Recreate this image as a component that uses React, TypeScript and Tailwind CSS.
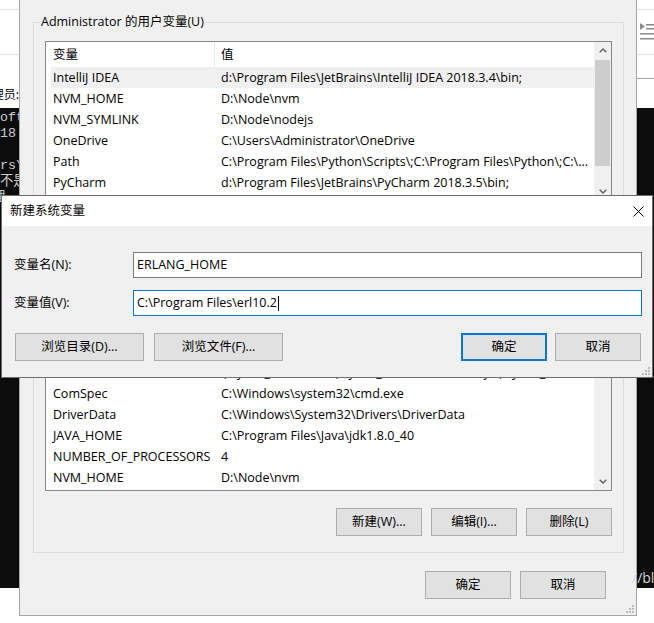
import React from 'react'

type Row = { name: string; value: string; active?: boolean }

const userVars: Row[] = [
  { name: 'IntelliJ IDEA', value: 'd:\\Program Files\\JetBrains\\IntelliJ IDEA 2018.3.4\\bin;', active: true },
  { name: 'NVM_HOME', value: 'D:\\Node\\nvm' },
  { name: 'NVM_SYMLINK', value: 'D:\\Node\\nodejs' },
  { name: 'OneDrive', value: 'C:\\Users\\Administrator\\OneDrive' },
  { name: 'Path', value: 'C:\\Program Files\\Python\\Scripts\\;C:\\Program Files\\Python\\;C:\\...' },
  { name: 'PyCharm', value: 'd:\\Program Files\\JetBrains\\PyCharm 2018.3.5\\bin;' },
  { name: 'TEMP', value: '%USERPROFILE%\\AppData\\Local\\Temp' },
]

const systemVars: Row[] = [
  { name: 'ChocolateyInstall', value: 'C:\\ProgramData\\chocolatey' },
  { name: 'ChocolateyLastPathUpdate', value: '131912345678901234' },
  { name: 'CLASSPATH', value: '.;%JAVA_HOME%\\lib;%JAVA_HOME%\\lib\\tools.jar;%JAVA_HOME%\\jre\\lib' },
  { name: 'ComSpec', value: 'C:\\Windows\\system32\\cmd.exe' },
  { name: 'DriverData', value: 'C:\\Windows\\System32\\Drivers\\DriverData' },
  { name: 'JAVA_HOME', value: 'C:\\Program Files\\Java\\jdk1.8.0_40' },
  { name: 'NUMBER_OF_PROCESSORS', value: '4' },
  { name: 'NVM_HOME', value: 'D:\\Node\\nvm' },
]

// only the slice of the console that peeks out left of the dialog
const terminalLines = ['Microsoft', '(c) 2018', '', 'C:\\Users\\', "'erl' 不是", '或批处理']

function Chevron({ down = false }: { down?: boolean }) {
  return (
    <svg width="8" height="5" viewBox="0 0 8 5" className={down ? 'rotate-180' : ''}>
      <polyline points="0.7,4.3 4,1 7.3,4.3" fill="none" stroke="#606060" strokeWidth="1.4" />
    </svg>
  )
}

function Grip() {
  return (
    <svg width="8" height="8" viewBox="0 0 8 8" className="absolute bottom-[2px] right-[2px]">
      <rect x="6" y="0" width="2" height="2" fill="#bdbdbd" />
      <rect x="3" y="3" width="2" height="2" fill="#bdbdbd" />
      <rect x="6" y="3" width="2" height="2" fill="#bdbdbd" />
      <rect x="0" y="6" width="2" height="2" fill="#bdbdbd" />
      <rect x="3" y="6" width="2" height="2" fill="#bdbdbd" />
      <rect x="6" y="6" width="2" height="2" fill="#bdbdbd" />
    </svg>
  )
}

function Btn({ children, className = '', focused = false }: { children: React.ReactNode; className?: string; focused?: boolean }) {
  return (
    <button
      className={`flex h-[28px] items-center justify-center bg-[#e1e1e1] text-black ${
        focused ? 'border-2 border-[#0078d7]' : 'border border-[#adadad]'
      } ${className}`}
    >
      {children}
    </button>
  )
}

function VarList({ rows, className, thumbHeight }: { rows: Row[]; className: string; thumbHeight: number }) {
  return (
    <div className={`mx-[11px] flex overflow-hidden border border-[#828790] bg-white ${className}`}>
      <div className="min-w-0 flex-1 pt-px">
        {/* header */}
        <div className="flex h-[24px] items-center">
          <div className="flex h-full w-[169px] items-center border-r border-[#e5e5e5] pl-[7px]">变量</div>
          <div className="pl-[6px]">值</div>
        </div>
        {rows.map((r) => (
          <div
            key={r.name}
            className={`ml-[5px] flex h-[21px] items-center whitespace-nowrap pt-px ${r.active ? 'bg-[#f0f0f0]' : ''}`}
          >
            <div className="w-[170px] overflow-hidden pl-[2px]">{r.name}</div>
            <div className="min-w-0 flex-1 overflow-hidden">{r.value}</div>
          </div>
        ))}
      </div>
      {/* scrollbar */}
      <div className="flex w-[17px] flex-col bg-[#f0f0f0]">
        <div className="flex h-[17px] items-center justify-center">
          <Chevron />
        </div>
        <div className="mx-px mt-px bg-[#cdcdcd]" style={{ height: thumbHeight }} />
        <div className="flex-1" />
        <div className="flex h-[17px] items-center justify-center">
          <Chevron down />
        </div>
      </div>
    </div>
  )
}

export default function App() {
  return (
    <div className="relative h-[623px] w-[654px] overflow-hidden bg-white font-['Open_Sans','Noto_Sans_CJK_SC',sans-serif] text-[12.5px] text-black">
      {/* left background windows */}
      <div className="absolute left-0 top-0 h-full w-[19px] overflow-hidden bg-white">
        <div className="h-[10px] border-b border-[#e3e3e3]" />
        <div className="h-[45px] border-b border-[#e3e3e3]" />
        <div className="flex h-[53px] justify-end pt-[31px] font-['Noto_Sans_CJK_SC',sans-serif] text-[12px] leading-[16px] whitespace-nowrap">管理员:</div>
        <div className="h-[480px] overflow-hidden bg-[#0c0c0c] pt-[2px] font-['Liberation_Mono','Noto_Sans_CJK_SC',monospace] text-[13.33px] leading-[16px] text-[#cccccc]">
          {terminalLines.map((line, i) => (
            <div key={i} className="ml-[-48px] h-[16px] whitespace-nowrap">
              {line}
            </div>
          ))}
        </div>
      </div>

      {/* right background windows */}
      <div className="absolute left-[637px] top-0 h-full w-[17px] overflow-hidden bg-white">
        <div className="h-[10px] border-b border-[#e3e3e3]" />
        <div className="h-[45px] border-b border-[#e3e3e3] pl-[3px] pt-[12px]">
          <svg width="14" height="20" viewBox="0 0 14 20">
            <polygon points="0,1 0,8 5,4.5" fill="#8a8a8a" />
            <rect x="6" y="2" width="8" height="1.5" fill="#8a8a8a" />
            <rect x="6" y="6" width="8" height="1.5" fill="#8a8a8a" />
            <rect x="0" y="11" width="14" height="1.5" fill="#8a8a8a" />
            <rect x="0" y="16" width="14" height="1.5" fill="#8a8a8a" />
          </svg>
        </div>
        <div className="h-[24px] border-b border-[#a0a0a0]" />
        <div className="h-[29px]" />
        <div className="h-[480px] bg-[#0c0c0c]" />
      </div>

      {/* 环境变量 dialog */}
      <div className="absolute left-[19px] top-0 h-[616px] w-[618px] border-x border-b border-[#a6a6a6] bg-[#f0f0f0]">
        <fieldset className="ml-[13px] mt-[14px] w-[591px] min-w-0 border border-[#dcdcdc] pb-[16px]">
          <legend className="ml-[6px] px-px leading-[16px]">Administrator 的用户变量(U)</legend>
          <VarList rows={userVars} className="mt-[11px] h-[160px]" thumbHeight={106} />
          <div className="mx-[11px] mt-[17px] flex justify-end gap-[9px]">
            <Btn className="w-[86px]">新建(N)...</Btn>
            <Btn className="w-[86px]">编辑(E)...</Btn>
            <Btn className="w-[86px]">删除(D)</Btn>
          </div>
        </fieldset>

        <fieldset className="ml-[13px] mt-[4px] w-[591px] min-w-0 border border-[#dcdcdc] pb-[16px]">
          <legend className="ml-[6px] px-px leading-[16px]">系统变量(S)</legend>
          <VarList rows={systemVars} className="mt-[11px] h-[197px]" thumbHeight={60} />
          <div className="mx-[11px] mt-[17px] flex justify-end gap-[9px]">
            <Btn className="w-[86px]">新建(W)...</Btn>
            <Btn className="w-[86px]">编辑(I)...</Btn>
            <Btn className="w-[86px]">删除(L)</Btn>
          </div>
        </fieldset>

        <div className="mt-[18px] flex justify-end gap-[9px] pr-[30px]">
          <Btn className="w-[86px]">确定</Btn>
          <Btn className="w-[86px]">取消</Btn>
        </div>
        <Grip />
      </div>

      {/* 新建系统变量 dialog */}
      <div className="absolute left-[1px] top-[195px] w-[652px] border border-[#6d6d6d] bg-[#f0f0f0]">
        <div className="flex h-[30px] items-center justify-between bg-white pl-[8px] pr-[8px]">
          <span>新建系统变量</span>
          <svg width="11" height="11" viewBox="0 0 11 11">
            <path d="M0.5 0.5 L10.5 10.5 M10.5 0.5 L0.5 10.5" stroke="#000" strokeWidth="1" />
          </svg>
        </div>
        <div className="relative pb-[16px] pl-[12px] pr-[10px] pt-[26px]">
          <div className="flex items-center">
            <label className="w-[119px]">变量名(N):</label>
            <div className="flex h-[26px] flex-1 items-center border border-[#7a7a7a] bg-white pl-[3px]">ERLANG_HOME</div>
          </div>
          <div className="mt-[12px] flex items-center">
            <label className="w-[119px]">变量值(V):</label>
            <div className="flex h-[26px] flex-1 items-center border border-[#0078d7] bg-white pl-[3px]">
              C:\Program Files\erl10.2
              <span className="ml-px inline-block h-[15px] w-px bg-black" />
            </div>
          </div>
          <div className="mt-[17px] flex items-center">
            <Btn className="ml-px w-[129px]">浏览目录(D)...</Btn>
            <Btn className="ml-[10px] w-[129px]">浏览文件(F)...</Btn>
            <Btn focused className="ml-auto w-[86px]">确定</Btn>
            <Btn className="ml-[8px] mr-px w-[86px]">取消</Btn>
          </div>
          <Grip />
        </div>
      </div>

      {/* watermark */}
      <div className="absolute left-[632px] top-[570px] whitespace-nowrap text-[14px] leading-[16px] text-[#d6d6d6]">//blog</div>
    </div>
  )
}
